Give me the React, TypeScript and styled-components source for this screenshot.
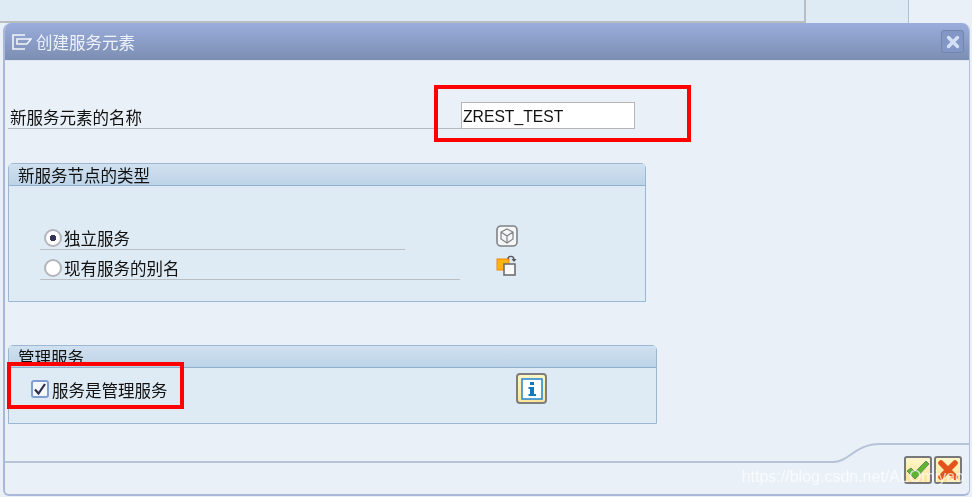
import React from 'react'
import styled, { createGlobalStyle } from 'styled-components'

const GlobalStyle = createGlobalStyle`
  html, body { margin: 0; padding: 0; background: #e9f0f7; }
  body { font-family: "Noto Sans CJK SC", "Liberation Sans", sans-serif; color: #111; }
`

const TitleIcon = () => (
  <svg width="20" height="16" viewBox="0 0 20 16" fill="none" stroke="#f2f5fb" strokeWidth="1.6">
    <path d="M13 1H1v14h12" />
    <path d="M5 5h14l-4 5H5z" />
  </svg>
)

const CloseIcon = () => (
  <svg width="14" height="14" viewBox="0 0 14 14" stroke="#d5e0f5" strokeWidth="3.4" strokeLinecap="round">
    <path d="M2.5 2.5l9 9M11.5 2.5l-9 9" />
  </svg>
)

const CubeIcon = () => (
  <svg width="22" height="22" viewBox="0 0 22 22" fill="none">
    <rect x="1" y="1" width="20" height="20" rx="4" fill="#f4f6f8" stroke="#7f8285" strokeWidth="1.6" />
    <path d="M11 4l6 3v7l-6 4-6-4V7zM5 7l6 4 6-4M11 11v7" stroke="#7f8285" strokeWidth="1.2" />
  </svg>
)

const CopyIcon = () => (
  <svg width="22" height="22" viewBox="0 0 22 22" fill="none">
    <rect x="1" y="5" width="12" height="11" fill="#ffb30f" stroke="#f08a10" strokeWidth="1" />
    <rect x="8" y="10" width="11" height="11" fill="#fafafa" stroke="#6f6f6f" strokeWidth="1.6" />
    <path d="M12 5c0-3 5-4 6 0" stroke="#555" strokeWidth="1.4" />
    <path d="M15.5 5h5l-2.500 3z" fill="#555" />
  </svg>
)

const InfoIcon = () => (
  <svg width="22" height="22" viewBox="0 0 22 22" fill="none">
    <rect x="1" y="1" width="20" height="20" fill="#fff" stroke="#2b8bd0" strokeWidth="1.6" />
    <rect x="9" y="4" width="4" height="3" fill="#1478bc" />
    <path d="M7.500 9H13v7h2v2H7.500v-2H9v-5H7.500z" fill="#1478bc" />
  </svg>
)

const CheckIcon = () => (
  <svg width="24" height="22" viewBox="0 0 24 22" fill="none">
    <path d="M1 12l4-3 4 4L20 2l3 3L9 20z" fill="#5fb52f" stroke="#5f8f6a" strokeWidth="1" />
  </svg>
)

const CrossIcon = () => (
  <svg width="22" height="22" viewBox="0 0 22 22">
    <path d="M4 4l14 14M18 4L4 18" stroke="#e2541c" strokeWidth="5.5" strokeLinecap="round" />
  </svg>
)

const App = () => {
  return (
    <Page>
      <GlobalStyle />
      <TopStrip>
        <TopCell />
        <TopTab />
      </TopStrip>
      <Dialog>
        <TitleBar>
          <TitleIcon />
          <TitleText>创建服务元素</TitleText>
          <CloseButton><CloseIcon /></CloseButton>
        </TitleBar>
        <Content>
          <NameRow>
            <NameLabel>新服务元素的名称</NameLabel>
            <NameInput>ZREST_TEST</NameInput>
            <NameMark />
          </NameRow>

          <Panel $width={638} $top={34} $height={139}>
            <PanelHeader>新服务节点的类型</PanelHeader>
            <RadioBody>
              <OptionRow>
                <OptionCol>
                  <OptionLine $width={365}>
                    <Radio $on />
                    <span>独立服务</span>
                  </OptionLine>
                </OptionCol>
                <CubeSlot><CubeIcon /></CubeSlot>
              </OptionRow>
              <OptionRow>
                <OptionCol>
                  <OptionLine $width={420}>
                    <Radio />
                    <span>现有服务的别名</span>
                  </OptionLine>
                </OptionCol>
                <CopyIcon />
              </OptionRow>
            </RadioBody>
          </Panel>

          <Panel $width={649} $top={43} $height={79}>
            <PanelHeader>管理服务</PanelHeader>
            <CheckBody>
              <CheckLabel>
                <CheckBox>
                  <svg width="14" height="14" viewBox="0 0 14 14" fill="none">
                    <path d="M2 7.500l3.500 4L12 2" stroke="#2c2c50" strokeWidth="2.200" />
                  </svg>
                </CheckBox>
                <CheckText>服务是管理服务</CheckText>
              </CheckLabel>
              <InfoButton><InfoIcon /></InfoButton>
              <CheckMark />
            </CheckBody>
          </Panel>

          <Footer>
            <FooterCurve width="967" height="52" viewBox="0 0 967 52" fill="none">
              <path d="M0 38H828C844 38 850 20 875 20H967" stroke="#b6c3d8" strokeWidth="2" />
            </FooterCurve>
            <FooterButton><CheckIcon /></FooterButton>
            <FooterButton><CrossIcon /></FooterButton>
            <Watermark>https://blog.csdn.net/ALOmiyao</Watermark>
          </Footer>
        </Content>
      </Dialog>
    </Page>
  )
}

export default App

const Page = styled.div`
  width: 972px;
  height: 497px;
  overflow: hidden;
  background: #e9f0f7;
  filter: blur(0.35px);
`
const TopStrip = styled.div`
  height: 23px;
  display: flex;
`
const TopCell = styled.div`
  width: 806px;
  box-sizing: border-box;
  background: #dfebf4;
  border-right: 2px solid #b9bdbf;
  border-bottom: 2px solid #b9bdbf;
`
const TopTab = styled.div`
  width: 102px;
  background: #dfebf4;
  border-right: 1px solid #a9c2dc;
`
const Dialog = styled.div`
  box-sizing: border-box;
  width: 967px;
  height: 473px;
  margin-left: 3px;
  border-left: 2px solid #a9b8d6;
  border-right: 1px solid #b3c0d6;
  border-bottom: 2px solid #a9b8d6;
  border-radius: 8px 8px 6px 6px;
  overflow: hidden;
  background: #e9f0f7;
`
const TitleBar = styled.div`
  height: 37px;
  display: flex;
  align-items: center;
  padding: 0 5px 0 7px;
  background: linear-gradient(#9aaddd, #7c8eb1);
  border-bottom: 1px solid #dfe6f0;
`
const TitleText = styled.div`
  margin-left: 4px;
  padding-top: 1px;
  flex: 1;
  font-size: 16.5px;
  color: #eef2fa;
`
const CloseButton = styled.div`
  width: 23px;
  height: 23px;
  box-sizing: border-box;
  display: flex;
  align-items: center;
  justify-content: center;
  border: 1px solid #7385ad;
  border-radius: 3px;
  background: #8397c6;
`
const Content = styled.div`
  padding-left: 3px;
`
const NameRow = styled.div`
  position: relative;
  height: 27px;
  margin-top: 41px;
  display: flex;
`
const NameLabel = styled.div`
  width: 453px;
  box-sizing: border-box;
  padding-left: 2px;
  border-bottom: 1px solid #b4babf;
  font-size: 16.5px;
  line-height: 30px;
`
const NameInput = styled.div`
  width: 174px;
  box-sizing: border-box;
  padding-left: 1px;
  background: #fff;
  border: 1px solid #b5b5b5;
  font-family: "Liberation Sans", Arial, sans-serif;
  font-size: 15.7px;
  line-height: 27px;
`
const NameMark = styled.div`
  position: absolute;
  left: 426px;
  top: -17px;
  width: 257px;
  height: 57px;
  box-sizing: border-box;
  border: 4px solid #fe0000;
`
const Panel = styled.div<{ $width: number; $top: number; $height: number }>`
  width: ${p => p.$width}px;
  height: ${p => p.$height}px;
  margin-top: ${p => p.$top}px;
  box-sizing: border-box;
  display: flex;
  flex-direction: column;
  background: #dfebf4;
  border: 1px solid #9cb7d4;
  border-top-left-radius: 5px;
  border-top-right-radius: 5px;
`
const PanelHeader = styled.div`
  height: 22px;
  box-sizing: border-box;
  padding-left: 9px;
  background: linear-gradient(#d0e1f0, #bdd3e7);
  border-bottom: 1px solid #8fb0cf;
  font-size: 16.5px;
  line-height: 22px;
`
const RadioBody = styled.div`
  padding: 34px 0 0 31px;
`
const OptionRow = styled.div`
  height: 30px;
  display: flex;
  align-items: center;
`
const OptionCol = styled.div`
  width: 456px;
`
const CubeSlot = styled.div`
  display: flex;
  margin-top: 2px;
`
const OptionLine = styled.div<{ $width: number }>`
  width: ${p => p.$width}px;
  height: 30px;
  box-sizing: border-box;
  display: flex;
  align-items: center;
  padding: 6px 0 0 4px;
  border-bottom: 1px solid #b9bfc3;
  font-size: 16.5px;
`
const Radio = styled.div<{ $on?: boolean }>`
  width: 18px;
  height: 18px;
  box-sizing: border-box;
  margin-right: 2px;
  border-radius: 50%;
  border: 2px solid #b3b5bb;
  background: ${p => (p.$on ? 'radial-gradient(circle, #34345a 0 3px, #fff 3.500px)' : '#fff')};
`
const CheckBody = styled.div`
  position: relative;
  display: flex;
  align-items: flex-start;
  padding: 5px 0 0 22px;
`
const CheckLabel = styled.div`
  width: 485px;
  display: flex;
  align-items: center;
  height: 32px;
  font-size: 16.5px;
`
const CheckText = styled.span`
  padding-top: 2px;
`
const CheckBox = styled.div`
  width: 18px;
  height: 18px;
  box-sizing: border-box;
  margin-right: 3px;
  display: flex;
  align-items: center;
  justify-content: center;
  background: #f4f7fb;
  border: 2px solid #7f9fd0;
  border-radius: 3px;
`
const InfoButton = styled.div`
  width: 31px;
  height: 31px;
  box-sizing: border-box;
  display: flex;
  align-items: center;
  justify-content: center;
  background: linear-gradient(#fff6c8, #fde59a);
  border: 2px solid #7e7e7e;
  border-radius: 4px;
`
const CheckMark = styled.div`
  position: absolute;
  left: -2px;
  top: -6px;
  width: 177px;
  height: 47px;
  box-sizing: border-box;
  border: 4px solid #fe0000;
`
const Footer = styled.div`
  position: relative;
  display: flex;
  justify-content: flex-end;
  gap: 2px;
  margin-left: -3px;
  padding: 32px 7px 0 0;
`
const FooterCurve = styled.svg`
  position: absolute;
  left: 0;
  top: 0;
`
const FooterButton = styled.div`
  position: relative;
  width: 28px;
  height: 28px;
  box-sizing: border-box;
  display: flex;
  align-items: center;
  justify-content: center;
  background: linear-gradient(#fff6c8, #fde39a);
  border: 2px solid #76787a;
  border-radius: 3px;
`
const Watermark = styled.div`
  position: absolute;
  right: 5px;
  top: 44px;
  font-family: "Liberation Sans", Arial, sans-serif;
  font-size: 16px;
  color: rgba(255, 255, 255, 0.7);
  white-space: nowrap;
`
